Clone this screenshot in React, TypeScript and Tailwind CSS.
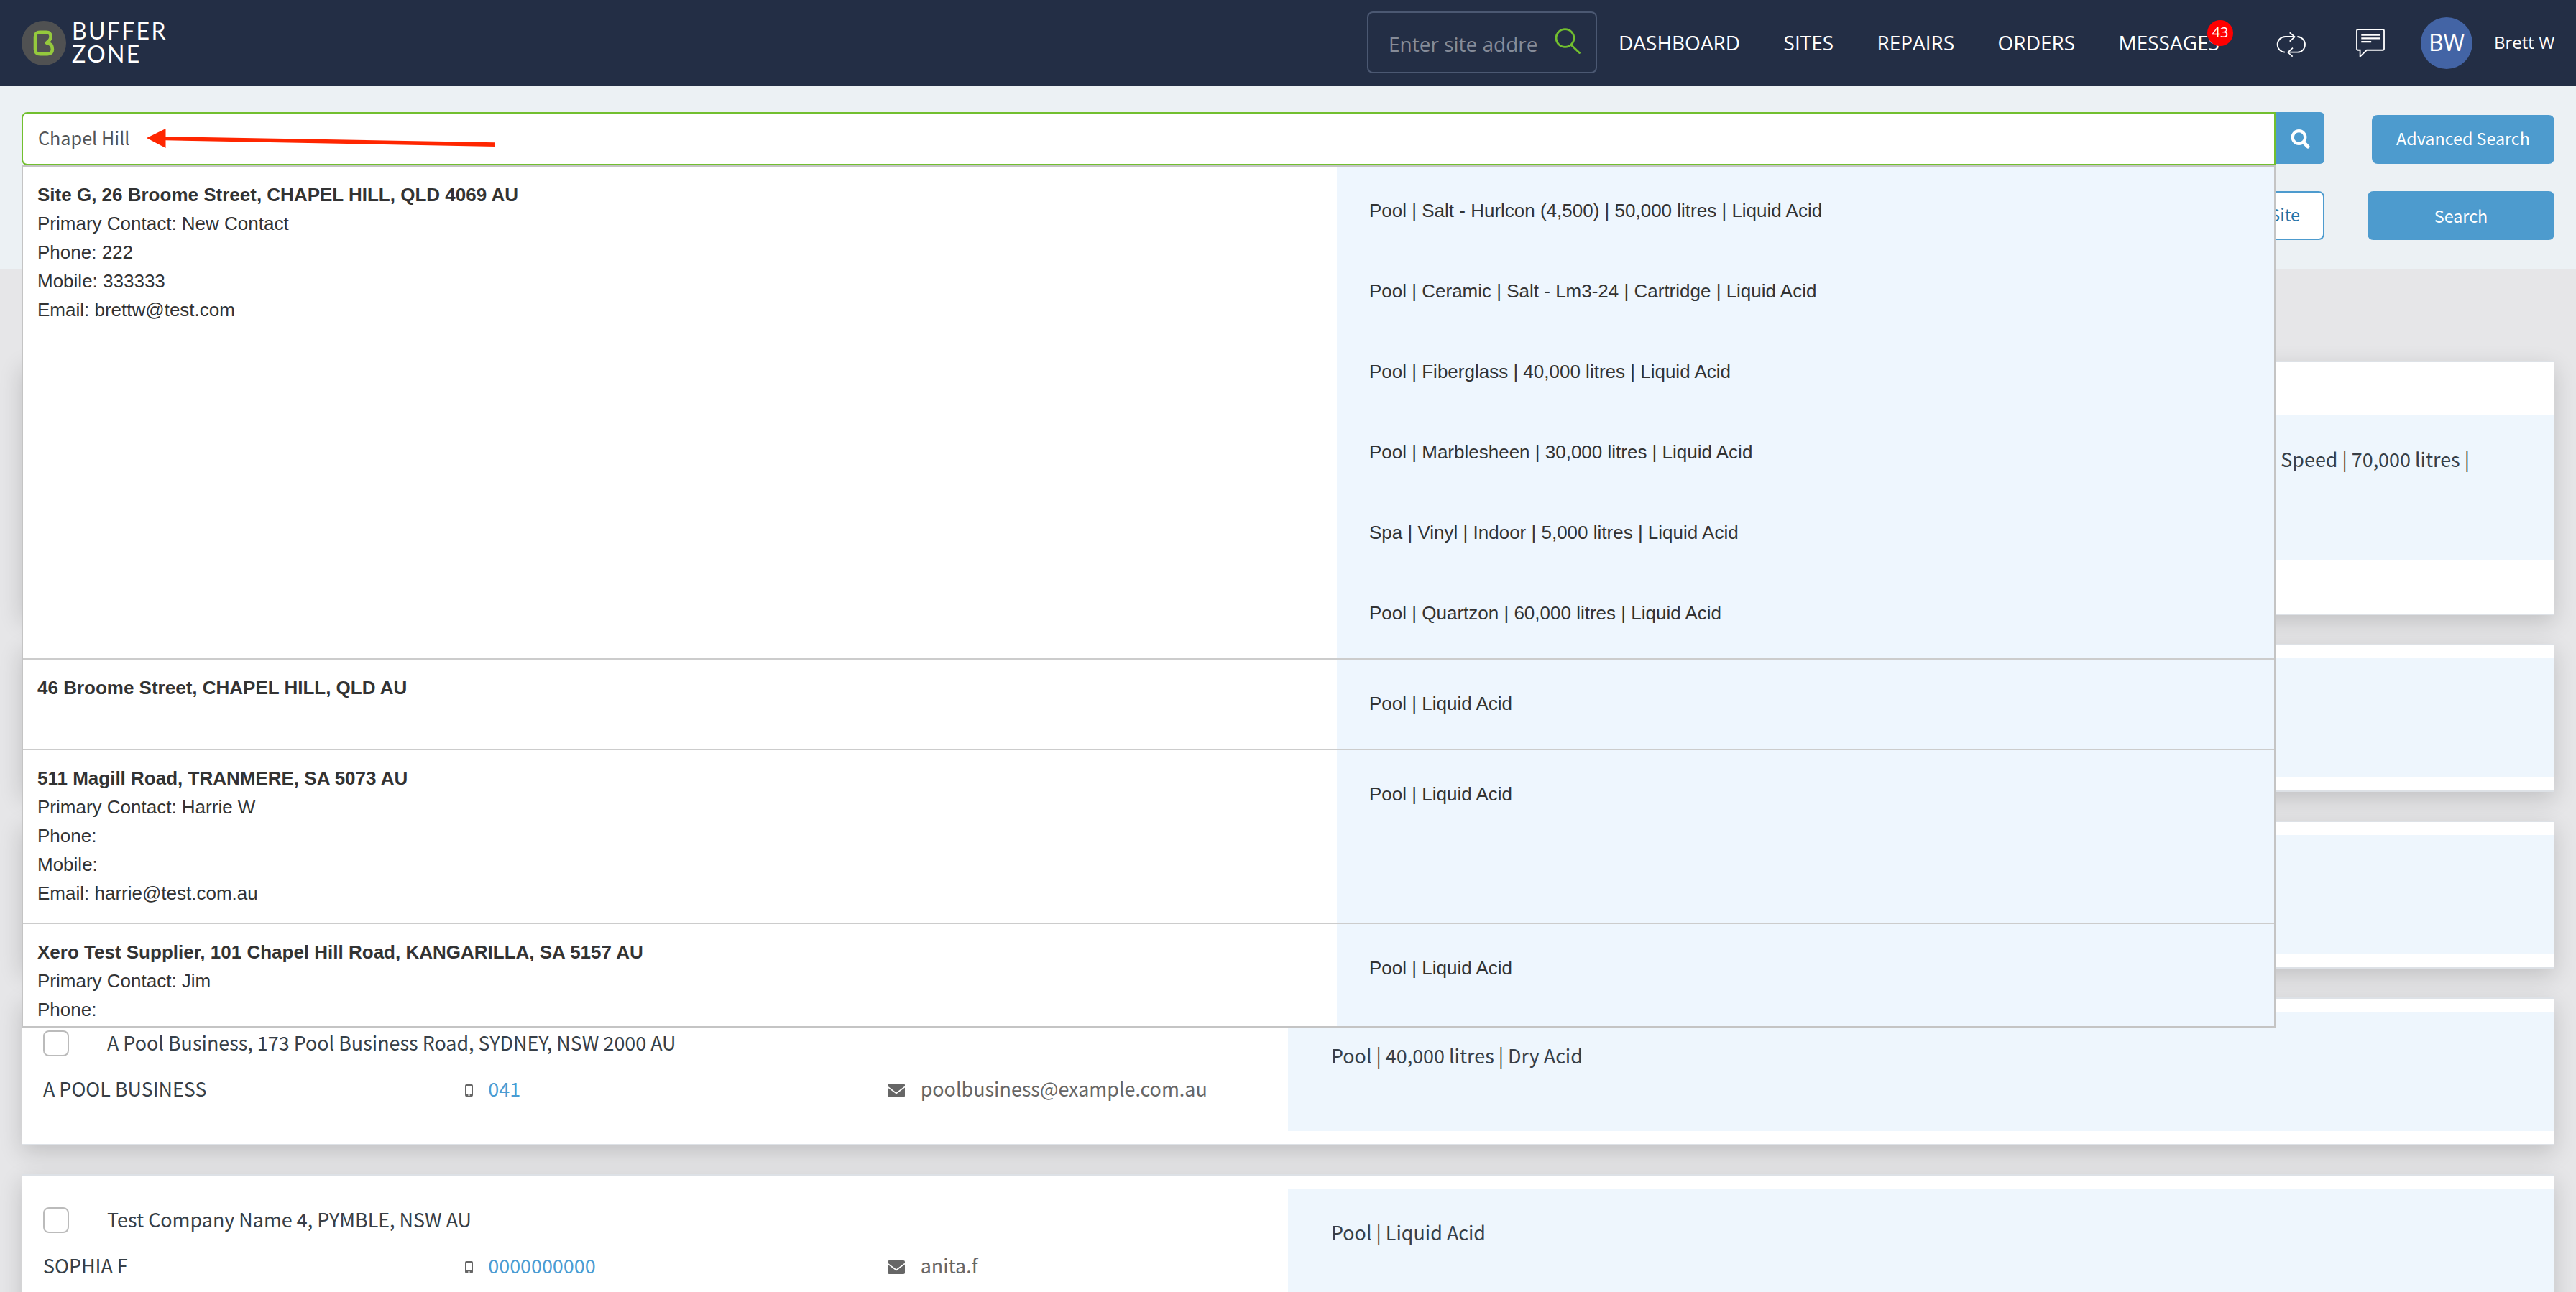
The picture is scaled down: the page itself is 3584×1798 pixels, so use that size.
import { ReactNode } from "react";

const navItems = ["DASHBOARD", "SITES", "REPAIRS", "ORDERS"];

const results = [
    {
        title: "Site G, 26 Broome Street, CHAPEL HILL, QLD 4069 AU",
        lines: ["Primary Contact: New Contact", "Phone: 222", "Mobile: 333333", "Email: brettw@test.com"],
        pools: [
            "Pool | Salt - Hurlcon (4,500) | 50,000 litres | Liquid Acid",
            "Pool | Ceramic | Salt - Lm3-24 | Cartridge | Liquid Acid",
            "Pool | Fiberglass | 40,000 litres | Liquid Acid",
            "Pool | Marblesheen | 30,000 litres | Liquid Acid",
            "Spa | Vinyl | Indoor | 5,000 litres | Liquid Acid",
            "Pool | Quartzon | 60,000 litres | Liquid Acid",
        ],
    },
    {
        title: "46 Broome Street, CHAPEL HILL, QLD AU",
        lines: [],
        pools: ["Pool | Liquid Acid"],
    },
    {
        title: "511 Magill Road, TRANMERE, SA 5073 AU",
        lines: ["Primary Contact: Harrie W", "Phone:", "Mobile:", "Email: harrie@test.com.au"],
        pools: ["Pool | Liquid Acid"],
    },
    {
        title: "Xero Test Supplier, 101 Chapel Hill Road, KANGARILLA, SA 5157 AU",
        lines: ["Primary Contact: Jim", "Phone:"],
        pools: ["Pool | Liquid Acid"],
    },
];

const Logo = () => (
    <div className="flex items-center gap-[8px]">
        <svg className="size-[62px]" viewBox="30 28 62 62" fill="none">
            <circle cx="61" cy="59" r="31" fill="#505152" />
            <path
                d="M64.8 58.6 L68.6 55.2 Q70.6 53.2 70.6 50 Q70.6 43.8 64.4 43.8 H55.5 Q49 43.8 49 50.2 V67.4 Q49 74.2 55.8 74.2 H66 Q72.9 74.2 72.9 67.6 Q72.9 59.6 64.8 58.6 Z"
                stroke="#95c93d"
                strokeWidth="4.6"
                strokeLinejoin="round"
            />
        </svg>
        <div className="flex flex-col pb-0.5 font-['Lato',sans-serif] text-[32px] leading-8 tracking-[2.3px] text-white">
            <span>BUFFER</span>
            <span>ZONE</span>
        </div>
    </div>
);

const SyncIcon = () => (
    <svg className="h-[36px] w-[42px]" viewBox="351 101 126 108" fill="none" stroke="#fff" strokeWidth="5.4">
        <path d="M387 187 C369 186 356 172 356 155 C356 137 370 122 389 122 H427" />
        <path d="M407 105 L428 122.500 L407 142" />
        <path d="M439 122 C458 123 471 137 471 155 C471 173 458 187 440 187 H401" />
        <path d="M420 169 L400 187.500 L419 205" />
    </svg>
);

const ChatIcon = () => (
    <svg className="size-10" viewBox="683 90 121 121" fill="none" stroke="#fff" strokeWidth="5.500">
        <path d="M692 93 H795 Q801 93 801 99 V174 Q801 180 795 180 H728 L700 207 V180 H692 Q686 180 686 174 V99 Q686 93 692 93 Z" />
        <path d="M705 116 H783 M705 130.500 H783 M705 145 H747" strokeWidth="7" />
    </svg>
);

const Header = () => (
    <header className="flex h-[120px] shrink-0 items-center bg-[#232e45] pr-[30px] pl-[30px] font-['Open_Sans',sans-serif] text-white">
        <Logo />

        {/* site search */}
        <div className="mt-[-2px] ml-auto flex h-[86px] w-[320px] items-center justify-between rounded-lg border-2 border-[#4b5872] pr-[21px] pl-7">
            <span className="pt-1 text-[28px] whitespace-nowrap text-[#868c99]">Enter site addre</span>
            <svg className="mb-1 size-9" viewBox="0 0 36 36" fill="none" stroke="#72bf2f" strokeWidth="2.800">
                <circle cx="14.500" cy="14" r="12.400" />
                <path d="M23 23.500 L34.500 34.500" strokeLinecap="round" />
            </svg>
        </div>

        <nav className="mb-0.5 ml-[30px] flex w-[836px] items-center justify-between text-[28px] leading-10">
            {navItems.map((item) => (
                <a key={item}>{item}</a>
            ))}
            <a className="relative">
                MESSAGES
                <span className="absolute -top-[11px] right-[-19px] flex size-9 items-center justify-center rounded-full bg-[#ff0000] pb-0.5 text-[20px]">43</span>
            </a>
        </nav>

        <div className="mt-1 ml-[79px]">
            <SyncIcon />
        </div>
        <div className="ml-[69px]">
            <ChatIcon />
        </div>
        <div className="ml-[50px] flex size-[72px] items-center justify-center rounded-full bg-[#4364a5] pb-0.5 text-[32px]">BW</div>
        <span className="ml-[30px] w-[84px] pb-0.5 text-[24px] whitespace-nowrap">Brett W</span>
    </header>
);

const Dropdown = () => (
    <div className="absolute top-[74px] left-0 h-[1200px] w-full overflow-hidden border-2 border-[#c4c4c4] bg-white font-['Liberation_Sans',Arial,sans-serif] text-[26px] leading-10 text-[#333]">
        {results.map((result) => (
            <div key={result.title} className="flex border-b-2 border-[#ccc]">
                <div className="w-[1828px] px-5 pt-[19px] pb-[21px]">
                    <p className="font-bold">{result.title}</p>
                    {result.lines.map((line) => (
                        <p key={line}>{line}</p>
                    ))}
                </div>
                <ul className="flex-1 bg-[#eef6fe] pt-[5px] pb-[7px] pl-[45px]">
                    {result.pools.map((pool) => (
                        <li key={pool} className="flex h-28 items-center">{pool}</li>
                    ))}
                </ul>
            </div>
        ))}
    </div>
);

const SearchPanel = () => (
    <section className="flex h-[254px] shrink-0 flex-col gap-9 bg-[#ecf1f4] px-[30px] pt-9 text-[23.3px]">
        <div className="flex h-[74px]">
            <div className="relative z-10 w-[3136px]">
                <div className="flex h-[74px] items-center rounded-l-lg border-2 border-[#72bf2f] bg-white pb-0.5 pl-[21px] text-[25.2px] text-[#555]">
                    Chapel Hill
                </div>
                {/* arrow pointing at the search term */}
                <svg className="absolute top-[22px] left-[173px] h-8 w-[490px]" viewBox="204 178 490 32" fill="#ff2600">
                    <path d="M205 192 L231.500 179 V190 L690 198.200 V204 L231.500 195.300 V206 Z" />
                </svg>
                <Dropdown />
            </div>
            <div className="flex h-[72px] w-[68px] items-center justify-center rounded-r-md bg-[#4d9bce]">
                <svg className="mt-0.5 size-[27px]" viewBox="0 0 27 27" fill="none" stroke="#fff">
                    <circle cx="11.500" cy="11" r="8.800" strokeWidth="4.200" />
                    <path d="M18.300 18.300 L24 24" strokeWidth="5" strokeLinecap="round" />
                </svg>
            </div>
            <button className="mt-1 ml-auto h-[68px] w-[254px] rounded-lg bg-[#4d9bce] pb-1 text-white">Advanced Search</button>
        </div>

        <div className="flex justify-end gap-[60px]">
            <button className="h-[68px] rounded-lg border-2 border-[#4d9bce] bg-white px-8 pb-1 text-[#1f74ab]">New Site</button>
            <button className="h-[68px] w-[260px] rounded-lg bg-[#4d9bce] text-white">Search</button>
        </div>
    </section>
);

type CardProps = {
    pool?: ReactNode;
    tall?: boolean;
    alignEnd?: boolean;
    address?: string;
    name?: string;
    mobile?: string;
    email?: string;
};

const SiteCard = ({ pool, tall, alignEnd, address, name, mobile, email }: CardProps) => (
    <div className={`flex shrink-0 border-y-2 border-[#dde1e6] bg-white shadow-[0_10px_30px_rgba(0,0,0,0.16)] ${tall ? "h-[354px] py-[74px]" : "h-[206px] py-[18px]"}`}>
        <div className="w-[1762px] pt-[26px]">
            {address && (
                <>
                    <div className="flex h-9 items-center gap-[53px] px-[30px]">
                        <span className="size-9 rounded-lg border-2 border-[#bbb] bg-white"></span>
                        <p className="pb-0.5 whitespace-nowrap">{address}</p>
                    </div>
                    <div className="mt-[26px] grid grid-cols-3">
                        <p className="h-10 px-[30px] leading-[38px]">{name}</p>
                        <div className="flex h-10 items-center px-[30px]">
                            <svg className="mt-[3px] h-[17px] w-[11px]" viewBox="0 0 11 17">
                                <rect width="11" height="17" rx="2" fill="#666" />
                                <rect x="1.500" y="3" width="8" height="10" fill="#fff" />
                                <rect x="4.500" y="14" width="2" height="2" fill="#fff" />
                            </svg>
                            <a className="ml-[21px] pb-0.5 text-[#4a9cd3]">{mobile}</a>
                        </div>
                        <div className="flex h-10 items-center px-[30px]">
                            <svg className="mt-0.5 h-[19px] w-6" viewBox="0 0 24 19">
                                <rect width="24" height="19" rx="2" fill="#666" />
                                <path d="M0 4.500 L12 13.500 L24 4.500" fill="none" stroke="#fff" strokeWidth="1.600" />
                            </svg>
                            <span className="ml-[22px] pb-0.5 text-[#666]">{email}</span>
                        </div>
                    </div>
                </>
            )}
        </div>
        <div className={`flex-1 bg-[#eef6fd] pt-[41px] pr-[118px] pl-[60px] leading-10 ${alignEnd ? "text-right" : ""}`}>{pool}</div>
    </div>
);

export default function App() {
    return (
        <div className="flex h-[1798px] w-[3584px] flex-col overflow-hidden bg-[#e6e6e8] font-['Noto_Sans_CJK_SC',sans-serif]">
            <Header />
            <SearchPanel />
            <main className="flex flex-col gap-10 px-[30px] pt-32 text-[26.9px] text-[#373f47]">
                <SiteCard tall alignEnd pool="- Speed | 70,000 litres |" />
                <SiteCard />
                <SiteCard />
                <SiteCard
                    address="A Pool Business, 173 Pool Business Road, SYDNEY, NSW 2000 AU"
                    name="A POOL BUSINESS"
                    mobile="041"
                    email="poolbusiness@example.com.au"
                    pool="Pool | 40,000 litres | Dry Acid"
                />
                <SiteCard
                    address="Test Company Name 4, PYMBLE, NSW AU"
                    name="SOPHIA F"
                    mobile="0000000000"
                    email="anita.f"
                    pool="Pool | Liquid Acid"
                />
            </main>
        </div>
    );
}
